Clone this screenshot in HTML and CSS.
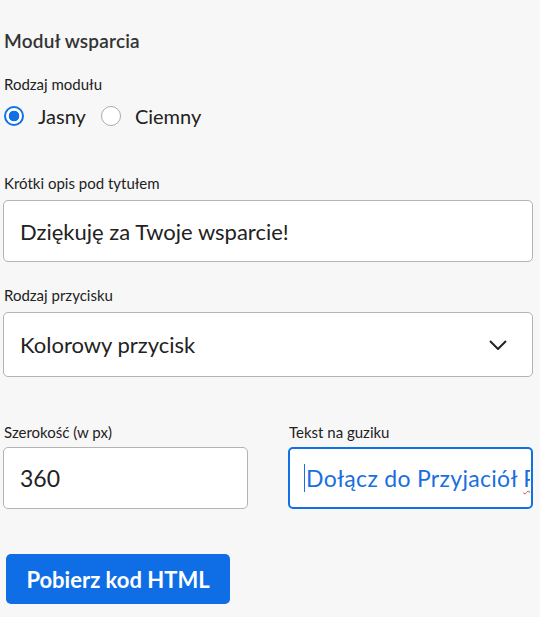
FILE: index.html
```html
<!DOCTYPE html>
<html lang="pl">
<head>
<meta charset="utf-8">
<link rel="stylesheet" href="styles.css">
</head>
<body>
<div class="page">
  <h2 class="title">Moduł wsparcia</h2>
  <div class="field f-type">
    <div class="label">Rodzaj modułu</div>
    <div class="radios">
      <label class="radio"><span class="dot checked"></span><span>Jasny</span></label>
      <label class="radio"><span class="dot"></span><span>Ciemny</span></label>
    </div>
  </div>
  <div class="field f-desc">
    <div class="label">Krótki opis pod tytułem</div>
    <div class="box">Dziękuję za Twoje wsparcie!</div>
  </div>
  <div class="field f-btn">
    <div class="label">Rodzaj przycisku</div>
    <div class="box select">
      <span>Kolorowy przycisk</span>
      <svg class="chev" width="18" height="10" viewBox="0 0 18 10"><path d="M1 1 L9 9 L17 1" fill="none" stroke="#222" stroke-width="2"/></svg>
    </div>
  </div>
  <div class="row">
    <div class="field col">
      <div class="label tight">Szerokość (w px)</div>
      <div class="box num">360</div>
    </div>
    <div class="field col">
      <div class="label tight">Tekst na guziku</div>
      <div class="box focus"><span class="caret"></span><span class="clip">Dołącz do Przyjaciół <span class="typo">P</span></span></div>
    </div>
  </div>
  <button class="btn">Pobierz kod HTML</button>
</div>
</body>
</html>
```
FILE: styles.css
```css
html, body {
  margin: 0;
  padding: 0;
  background: #f7f7f7;
}
body {
  font-family: Lato, "Open Sans", sans-serif;
  color: #222;
}
.page {
  padding: 28px 8px 0 3px;
  width: 530px;
}
.title {
  margin: 0 0 0 1px;
  font-size: 19px;
  font-weight: 600;
  color: #333;
  line-height: 26px;
  letter-spacing: 0.2px;
}
.field {
  display: flex;
  flex-direction: column;
}
.label {
  font-size: 15px;
  color: #222;
  line-height: 20px;
  margin: 0 0 7px 1px;
}
.label.tight {
  margin-bottom: 5px;
}
.f-type {
  margin-top: 20px;
}
.f-type .label {
  margin-bottom: 9px;
}
.radios {
  display: flex;
  align-items: center;
  gap: 15px;
}
.radio {
  display: flex;
  align-items: center;
  gap: 14px;
  font-size: 20px;
  line-height: 26px;
}
.dot {
  width: 20px;
  height: 20px;
  border-radius: 50%;
  border: 1px solid #aaa;
  background: #fff;
  box-sizing: border-box;
}
.radio:first-child .dot {
  margin-left: 1px;
}
.dot.checked {
  border: 2px solid #1170e6;
  background: radial-gradient(circle, #1170e6 0 5px, #fff 5.6px);
}
.f-desc {
  margin-top: 44px;
}
.f-btn {
  margin-top: 23px;
}
.box {
  box-sizing: border-box;
  height: 62px;
  background: #fff;
  border: 1px solid #b4b4b4;
  border-radius: 5px;
  padding: 0 16px;
  font-size: 22px;
  display: flex;
  align-items: center;
  color: #222;
}
.num {
  font-size: 23px;
}
.select {
  height: 65px;
  justify-content: space-between;
  padding-right: 25px;
}
.chev {
  display: block;
}
.row {
  display: flex;
  gap: 40px;
  margin-top: 45px;
}
.col {
  width: 245px;
}
.focus {
  border: 2px solid #1170e6;
  color: #1a6fe0;
  padding-left: 14px;
  padding-right: 0;
  overflow: hidden;
  white-space: nowrap;
}
.caret {
  display: inline-block;
  width: 1px;
  height: 28px;
  background: #1a6fe0;
  margin-right: 1px;
  flex: none;
}
.clip {
  overflow: hidden;
  flex: none;
  width: 224px;
  display: inline-block;
  font-size: 23px;
  padding-bottom: 4px;
  margin-top: 4px;
  letter-spacing: 0.3px;
}
.typo {
  text-decoration: underline wavy #e53935;
  text-decoration-thickness: 1px;
  text-underline-offset: 3px;
}
.btn {
  display: block;
  margin: 45px 0 0 3px;
  height: 50px;
  width: 224px;
  border: none;
  border-radius: 5px;
  background: #0f6ee6;
  color: #fff;
  font-family: Lato, sans-serif;
  font-weight: 700;
  font-size: 22px;
  cursor: pointer;
}
```
